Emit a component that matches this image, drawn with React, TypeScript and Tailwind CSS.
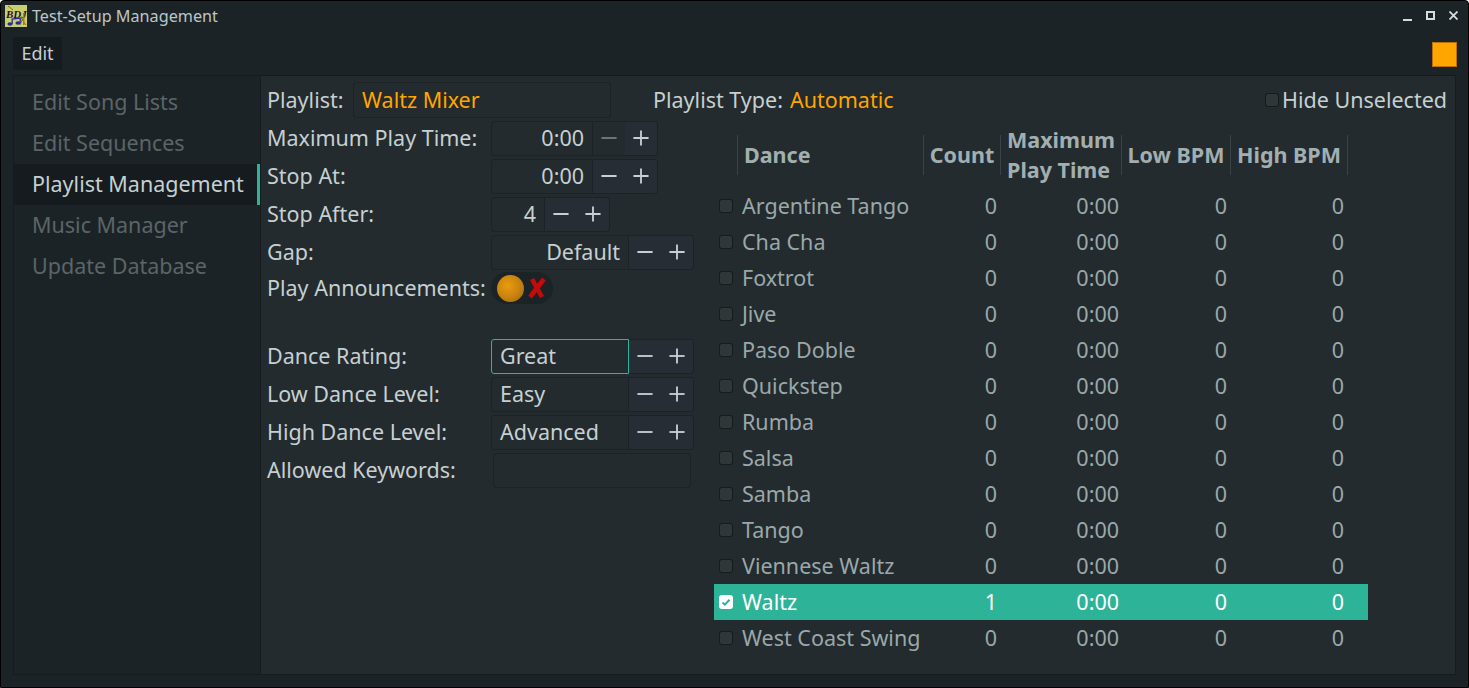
import React from 'react'
import { Minus, Plus } from 'lucide-react'

const dances = [
  'Argentine Tango',
  'Cha Cha',
  'Foxtrot',
  'Jive',
  'Paso Doble',
  'Quickstep',
  'Rumba',
  'Salsa',
  'Samba',
  'Tango',
  'Viennese Waltz',
  'Waltz',
  'West Coast Swing',
]

const sideItems = ['Edit Song Lists', 'Edit Sequences', 'Playlist Management', 'Music Manager', 'Update Database']

const Logo = () => (
  <svg width="22" height="22" viewBox="0 0 22 22" className="shrink-0">
    <rect width="22" height="22" fill="#c9cf6e" />
    <path d="M3 1l5 4M16 13l5 7M19 11l-4 9" stroke="#8a6a20" strokeWidth="1" />
    <text x="1" y="12.5" fontFamily="Liberation Serif" fontStyle="italic" fontWeight="700" fontSize="11" fill="#2a1020">BDJ</text>
    <ellipse cx="5" cy="19" rx="2.6" ry="1.7" fill="#2b2a9a" />
    <ellipse cx="13" cy="18" rx="2.6" ry="1.7" fill="#2b2a9a" />
    <path d="M7.2 19v-5l8-1v5" stroke="#2b2a9a" strokeWidth="1.3" fill="none" />
    <rect x="18" y="8" width="1.5" height="12" fill="#b07a18" />
  </svg>
)

const Spin = ({ value, w, align = 'right', focus = false, dimMinus = false, plain = false }: {
  value: string
  w: string
  align?: 'left' | 'right'
  focus?: boolean
  dimMinus?: boolean
  plain?: boolean
}) => (
  <div className="flex h-[35px] rounded-[3px] border border-[#1c2326]">
    <div className={`flex items-center px-2 ${w} ${align === 'right' ? 'justify-end' : 'justify-start'} ${focus ? 'relative z-10 mr-px rounded-l-[2px] outline outline-[#2db398]' : 'border-r border-[#1c2326]'}`}>
      {value}
    </div>
    <div className={`flex w-[32px] items-center justify-center ${plain ? '' : 'bg-[#262d35]'}`}>
      <Minus size={26} strokeWidth={1.7} strokeLinecap="butt" className={dimMinus ? 'text-[#6b7576]' : 'text-[#c6d0d2]'} />
    </div>
    <div className="flex w-[32px] items-center justify-center rounded-r-[3px] bg-[#262d35]">
      <Plus size={26} strokeWidth={1.7} strokeLinecap="butt" className="text-[#c6d0d2]" />
    </div>
  </div>
)

const FormRow = ({ label, h = 'h-[38px]', children }: { label: string; h?: string; children?: React.ReactNode }) => (
  <div className={`flex items-center ${h}`}>
    <div className="w-[224px] shrink-0">{label}</div>
    {children}
  </div>
)

const HeaderCell = ({ w, children }: { w: string; children: React.ReactNode }) => (
  <div className={`flex h-[40px] items-center justify-center border-r border-[#394346] text-center leading-[30px] ${w}`}>
    {children}
  </div>
)

export default function App() {
  return (
    <div className="flex h-[688px] w-[1469px] flex-col overflow-hidden rounded-t-[4px] border border-black bg-[#1c2326] text-[21.5px] text-[#c6d0d2] font-['Noto_Sans',sans-serif]">
      <div className="flex h-[29px] shrink-0 items-center pl-[4px] pr-[10px]">
        <Logo />
        <span className="ml-[5px] mt-[2px] text-[16.2px] text-[#bcc6c8]">Test-Setup Management</span>
        <div className="ml-auto flex items-center gap-[14px] text-[#d5dcdd]">
          <div className="mt-[8px] h-[2px] w-[9px] bg-current" />
          <div className="h-[9px] w-[9px] border-2 border-current" />
          <svg width="9" height="9" viewBox="0 0 9 9"><path d="M0.5 0.5l8 8M8.5 0.5l-8 8" stroke="currentColor" strokeWidth="1.8" /></svg>
        </div>
      </div>
      <div className="flex h-[45px] shrink-0 items-start pl-[12px] pr-[11px] pt-[7px]">
        <div className="flex h-[33px] w-[49px] items-center justify-center bg-[#151b1e] text-[18px]">Edit</div>
        <div className="ml-auto mt-[5px] h-[25px] w-[25px] border border-[#b96f0c] bg-[#ffa500]" />
      </div>
      <div className="mx-[12px] flex h-[600px] border border-[#151b1e]">
        <div className="flex w-[246px] shrink-0 flex-col bg-[#1c2326] pt-[6px]">
          {sideItems.map((s) => (
            <div
              key={s}
              className={`flex h-[41px] items-center pb-px pl-[18px] ${s === 'Playlist Management' ? 'border-r-[3px] border-[#2db398] bg-[#151b1e] text-[#c6d0d2]' : 'text-[#5b6566]'}`}
            >
              {s}
            </div>
          ))}
        </div>
        <div className="flex min-w-0 flex-1 flex-col border-l border-[#151b1e] bg-[#232b2e] pl-[6px] pr-[8px] pt-[5px]">
          <div className="flex h-[38px] shrink-0 items-center">
            <span className="w-[86px] shrink-0">Playlist:</span>
            <div className="flex h-[36px] w-[258px] items-center rounded-[3px] border border-[#1c2326] px-2 text-[#ffa500]">Waltz Mixer</div>
            <span className="ml-[42px]">Playlist Type:</span>
            <span className="ml-[7px] text-[#ffa500]">Automatic</span>
            <div className="ml-auto flex items-center">
              <div className="mr-[3px] h-[14px] w-[14px] rounded-[3px] border border-[#151b1e] bg-[#2f3838]" />
              Hide Unselected
            </div>
          </div>
          <div className="flex">
            <div className="w-[447px] shrink-0">
              <FormRow label="Maximum Play Time:"><Spin value="0:00" w="w-[101px]" dimMinus plain /></FormRow>
              <FormRow label="Stop At:"><Spin value="0:00" w="w-[101px]" /></FormRow>
              <FormRow label="Stop After:"><Spin value="4" w="w-[53px]" /></FormRow>
              <FormRow label="Gap:"><Spin value="Default" w="w-[137px]" /></FormRow>
              <FormRow label="Play Announcements:" h="h-[34px]">
                <div className="flex h-[32px] w-[62px] items-center rounded-full bg-[#1c2327] pl-[6px]">
                  <div className="h-[27px] w-[27px] rounded-full bg-[radial-gradient(circle_at_40%_40%,#ea9c0c,#c98410_50%,#96640e)]" />
                  <svg width="20" height="22" viewBox="0 0 20 22" className="ml-[3px]">
                    <path d="M3 20L17 2M5 2l10 18" stroke="#c40a0a" strokeWidth="4.6" fill="none" />
                  </svg>
                </div>
              </FormRow>
              <div className="h-[32px]" />
              <FormRow label="Dance Rating:"><Spin value="Great" w="w-[136px]" align="left" focus /></FormRow>
              <FormRow label="Low Dance Level:"><Spin value="Easy" w="w-[137px]" align="left" /></FormRow>
              <FormRow label="High Dance Level:"><Spin value="Advanced" w="w-[137px]" align="left" /></FormRow>
              <FormRow label="Allowed Keywords:">
                <div className="ml-[2px] h-[35px] w-[198px] rounded-[3px] border border-[#1c2326]" />
              </FormRow>
            </div>
            <div className="w-[654px] shrink-0 pt-[16px] text-[#9aa8aa]">
              <div className="flex font-bold text-[#a2afb1]">
                <HeaderCell w="w-[24px]">{null}</HeaderCell>
                <div className="flex h-[40px] w-[186px] items-center border-r border-[#394346] pl-[6px]">Dance</div>
                <HeaderCell w="w-[77px]">Count</HeaderCell>
                <HeaderCell w="w-[121px]"><span className="text-left">Maximum<br />Play Time</span></HeaderCell>
                <HeaderCell w="w-[109px]">Low BPM</HeaderCell>
                <HeaderCell w="w-[117px]">High BPM</HeaderCell>
              </div>
              <div className="mt-[13px]">
                {dances.map((d) => {
                  const on = d === 'Waltz'
                  return (
                    <div key={d} className={`flex h-[36px] items-center ${on ? 'bg-[#2db398] text-white' : ''}`}>
                      <div className="flex w-[28px] shrink-0 justify-start pl-[5px]">
                        {on ? (
                          <div className="flex h-[14px] w-[14px] items-center justify-center rounded-[3px] bg-white">
                            <svg width="10" height="10" viewBox="0 0 10 10"><path d="M1.5 5.5l2.4 2.2 4.6-5" stroke="#2db398" strokeWidth="2" fill="none" /></svg>
                          </div>
                        ) : (
                          <div className="h-[14px] w-[14px] rounded-[3px] border border-[#151b1e] bg-[#2f3838]" />
                        )}
                      </div>
                      <div className="w-[182px] shrink-0">{d}</div>
                      <div className="w-[73px] shrink-0 text-right">{on ? '1' : '0'}</div>
                      <div className="w-[122px] shrink-0 text-right">0:00</div>
                      <div className="w-[108px] shrink-0 text-right">0</div>
                      <div className="w-[117px] shrink-0 text-right">0</div>
                    </div>
                  )
                })}
              </div>
            </div>
          </div>
        </div>
      </div>
    </div>
  )
}
